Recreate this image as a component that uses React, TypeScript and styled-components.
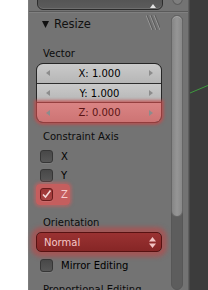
import * as React from "react";
import styled, { createGlobalStyle, css } from "styled-components";

const VECTOR = [
  ["X", "1.000"],
  ["Y", "1.000"],
  ["Z", "0.000"],
];

const AXES = ["X", "Y", "Z"];

const GlobalStyle = createGlobalStyle`
  html, body {
    margin: 0;
    padding: 0;
    background: #fff;
  }

  body {
    font-family: "DejaVu Sans", "Liberation Sans", sans-serif;
    font-size: 10px;
    color: #000;
  }
`;

const ArrowLeft = () => (
  <svg width="4" height="6" viewBox="0 0 4 6">
    <path d="M4 0 L0 3 L4 6 Z" fill="#8c8c8c" />
  </svg>
);

const ArrowRight = () => (
  <svg width="4" height="6" viewBox="0 0 4 6">
    <path d="M0 0 L4 3 L0 6 Z" fill="#8c8c8c" />
  </svg>
);

const App = () => {
  return (
    <Page>
      <GlobalStyle />
      <Gutter />
      <Panel>
        <PanelTop>
          <TopDropdown>
            <svg width="6" height="4" viewBox="0 0 6 4">
              <path d="M0 4 L3 0 L6 4 Z" fill="#e2e2e2" />
            </svg>
          </TopDropdown>
          <TopKnob />
        </PanelTop>
        <Body>
          <Content>
            <Header>
              <svg width="7" height="7" viewBox="0 0 7 7">
                <path d="M0 0 L7 0 L3.5 7 Z" fill="#111" />
              </svg>
              <Title>Resize</Title>
              <Grip width="14" height="15" viewBox="0 0 14 15">
                {[0, 4, 8].map((o) => (
                  <g key={o}>
                    <line x1={o} y1="0" x2={o + 6} y2="15" stroke="#9a9a9a" strokeWidth="1" />
                    <line x1={o + 1} y1="0" x2={o + 7} y2="15" stroke="#555" strokeWidth="0.8" />
                  </g>
                ))}
              </Grip>
            </Header>

            <FieldLabel $top={11}>Vector</FieldLabel>
            <VectorBox>
              {VECTOR.map(([axis, value], i) => (
                <VectorRow key={axis} $index={i} $active={axis === "Z"}>
                  <ArrowLeft />
                  <span>
                    {axis}: {value}
                  </span>
                  <ArrowRight />
                </VectorRow>
              ))}
            </VectorBox>

            <FieldLabel $top={7}>Constraint Axis</FieldLabel>
            <CheckList>
              {AXES.map((axis) =>
                axis === "Z" ? (
                  <CheckRow key={axis}>
                    <Highlight>
                      <Check $on>
                        <svg width="11" height="11" viewBox="0 0 11 11">
                          <path
                            d="M2 5.5 L4.5 8 L9.5 1.5"
                            fill="none"
                            stroke="#f4dada"
                            strokeWidth="1.6"
                          />
                        </svg>
                      </Check>
                      <CheckText $on>{axis}</CheckText>
                    </Highlight>
                  </CheckRow>
                ) : (
                  <CheckRow key={axis}>
                    <Check />
                    <CheckText>{axis}</CheckText>
                  </CheckRow>
                )
              )}
            </CheckList>

            <FieldLabel $top={12}>Orientation</FieldLabel>
            <Dropdown>
              <span>Normal</span>
              <svg width="7" height="11" viewBox="0 0 7 11">
                <path d="M0 4.5 L3.5 0 L7 4.5 Z" fill="#f3c4c4" />
                <path d="M0 6.5 L3.5 11 L7 6.5 Z" fill="#f3c4c4" />
              </svg>
            </Dropdown>

            <MirrorRow>
              <Check />
              <CheckText>Mirror Editing</CheckText>
            </MirrorRow>

            <FieldLabel $top={8}>Proportional Editing</FieldLabel>
          </Content>
          <ScrollCol>
            <ScrollThumb />
            <ScrollTrack />
          </ScrollCol>
        </Body>
      </Panel>
      <Viewport>
        <svg width="19" height="290" viewBox="0 0 19 290">
          <line x1="0" y1="93" x2="19" y2="85" stroke="#3f9a3f" strokeWidth="1" />
        </svg>
      </Viewport>
    </Page>
  );
};

const Page = styled.div`
  display: flex;
  width: 208px;
  height: 290px;
  overflow: hidden;
`;

const Gutter = styled.div`
  flex: none;
  width: 28px;
  background: #fff;
`;

const Panel = styled.div`
  flex: none;
  display: flex;
  flex-direction: column;
  width: 161px;
  box-sizing: border-box;
  background: #737373;
  border-left: 1px solid #7c7c7c;
  border-right: 1px solid #5e5e5e;
`;

const PanelTop = styled.div`
  flex: none;
  display: flex;
  align-items: flex-end;
  height: 11px;
  overflow: hidden;
  border-bottom: 1px solid #5a5a5a;
  box-shadow: 0 1px 0 #808080;
`;

const TopDropdown = styled.div`
  flex: none;
  display: flex;
  align-items: flex-end;
  justify-content: flex-end;
  box-sizing: border-box;
  width: 126px;
  height: 20px;
  margin: 0 0 1px 8px;
  padding: 0 6px 1px 8px;
  border: 1px solid #2c2c2c;
  border-radius: 6px;
  background: linear-gradient(#4e4e4e, #5c5c5c);
  box-shadow: inset 0 -1px 0 #6e6e6e;
`;

const TopKnob = styled.div`
  flex: none;
  width: 11px;
  height: 14px;
  margin: 0 0 6px 9px;
  box-sizing: border-box;
  border-radius: 50%;
  border: 1px solid #5c5c5c;
  background: #7e7e7e;
`;

const Body = styled.div`
  flex: 1;
  display: flex;
  min-height: 0;
`;

const Content = styled.div`
  flex: none;
  width: 142px;
`;

const Header = styled.div`
  display: flex;
  align-items: center;
  height: 24px;
  padding-left: 13px;
`;

const Title = styled.span`
  margin-left: 5px;
  font-size: 11.5px;
  color: #111;
`;

const Grip = styled.svg`
  align-self: flex-start;
  margin: 3px 11px 0 auto;
`;

const FieldLabel = styled.div<{ $top: number }>`
  margin-top: ${(p) => p.$top}px;
  padding-left: 14px;
  line-height: 14px;
  white-space: nowrap;
  color: #0c0c0c;
`;

const VectorBox = styled.div`
  display: flex;
  flex-direction: column;
  box-sizing: border-box;
  width: 126px;
  height: 60px;
  margin: 2px 0 0 7px;
  border: 1px solid #262626;
  border-radius: 7px;
  background: #2e2e2e;
`;

const VectorRow = styled.div<{ $index: number; $active?: boolean }>`
  flex: 1;
  display: flex;
  align-items: center;
  justify-content: space-between;
  padding: 0 8px 0 9px;
  background: linear-gradient(#cacaca, #b6b6b6);
  color: #000;

  ${(p) => p.$index > 0 && "margin-top: 1px;"}
  ${(p) => p.$index === 0 && "border-radius: 6px 6px 0 0;"}
  ${(p) => p.$index === 2 && "border-radius: 0 0 6px 6px;"}

  ${(p) =>
    p.$active &&
    css`
      position: relative;
      background: linear-gradient(#da8484, #cd7474);
      color: #5a1414;
      box-shadow: 0 0 3px 3px rgba(200, 72, 72, 0.7);
    `}
`;

const CheckList = styled.div`
  margin-top: 3px;
`;

const CheckRow = styled.div`
  display: flex;
  align-items: center;
  height: 19px;
  padding-left: 11px;
`;

const MirrorRow = styled(CheckRow)`
  margin-top: 4px;
`;

const Highlight = styled.span`
  display: inline-flex;
  align-items: center;
  margin-left: -4px;
  padding: 4px 2px 4px 4px;
  border-radius: 4px;
  background: rgba(206, 92, 92, 0.9);
  box-shadow: 0 0 3px 2px rgba(206, 92, 92, 0.55);
`;

const Check = styled.span<{ $on?: boolean }>`
  flex: none;
  display: inline-flex;
  align-items: center;
  justify-content: center;
  box-sizing: border-box;
  width: 13px;
  height: 13px;
  border-radius: 3px;
  border: 1px solid #363636;
  background: linear-gradient(#484848, #575757);
  box-shadow: 0 1px 0 rgba(255, 255, 255, 0.08);

  ${(p) =>
    p.$on &&
    css`
      border-color: #6a1c1c;
      background: linear-gradient(#9c3434, #a94444);
    `}
`;

const CheckText = styled.span<{ $on?: boolean }>`
  margin-left: 8px;
  color: ${(p) => (p.$on ? "#f6cccc" : "#000")};
  white-space: nowrap;
`;

const Dropdown = styled.div`
  display: flex;
  align-items: center;
  justify-content: space-between;
  box-sizing: border-box;
  width: 126px;
  height: 20px;
  margin: 2px 0 0 7px;
  padding: 0 5px 0 7px;
  border: 1px solid #571212;
  border-radius: 5px;
  background: linear-gradient(#9a3232, #862626);
  color: #f6c8c8;
  box-shadow: 0 0 4px 5px rgba(192, 70, 70, 0.6);
`;

const ScrollCol = styled.div`
  flex: none;
  display: flex;
  flex-direction: column;
  width: 12px;
  margin-top: 3px;
  border-radius: 6px;
  background: #5d5d5d;
  border: 1px solid #575757;
  box-sizing: border-box;
`;

const ScrollThumb = styled.div`
  flex: none;
  height: 200px;
  margin: -1px;
  border-radius: 6px;
  border: 1px solid #666;
  background: linear-gradient(90deg, #858585, #969696 50%, #888);
  box-shadow: inset 0 1px 0 #a8a8a8;
`;

const ScrollTrack = styled.div`
  flex: 1;
`;

const Viewport = styled.div`
  flex: 1;
  background: #3c3c3c;
  border-left: 1px solid #4a4a4a;

  svg {
    display: block;
  }
`;

export default App;
